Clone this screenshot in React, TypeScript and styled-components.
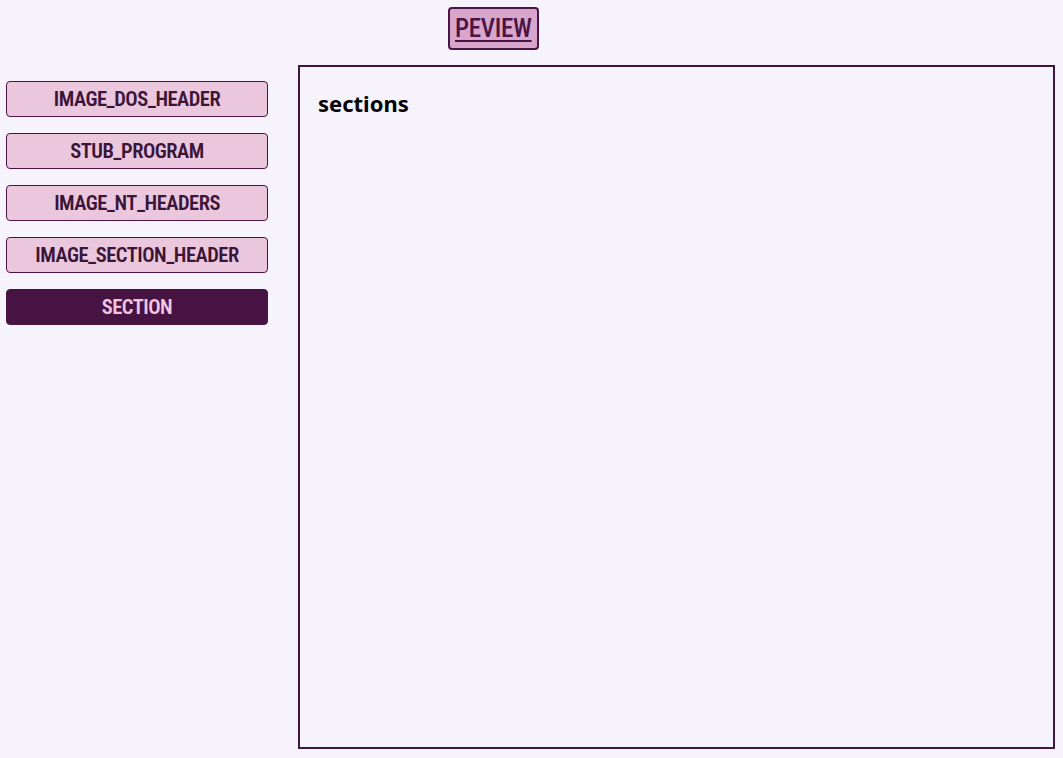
import React from "react";
import styled, { createGlobalStyle } from "styled-components";

const Global = createGlobalStyle`
  html, body { margin: 0; padding: 0; background: #f6f3fd; }
  body { font-family: "Noto Sans", sans-serif; }
`;

const Page = styled.div`
  width: 1063px;
  height: 758px;
  box-sizing: border-box;
  padding: 7px 8px 9px 6px;
  display: flex;
  flex-direction: column;
  background: #f6f3fd;
`;

const TopBar = styled.div`
  display: flex;
  justify-content: flex-start;
  padding-left: 442px;
  height: 43px;
`;

const PreviewButton = styled.button`
  box-sizing: border-box;
  height: 43px;
  padding: 0 5px;
  border: 2px solid #4b1446;
  border-radius: 4px;
  background: #d9a6cb;
  color: #4b1446;
  font-family: "Roboto Condensed", Roboto, sans-serif;
  font-weight: 500;
  font-size: 25px;
  letter-spacing: -0.3px;
  text-decoration: underline;
  text-underline-offset: 3px;
  cursor: pointer;
`;

const Body = styled.div`
  display: flex;
  flex: 1;
  margin-top: 15px;
  gap: 30px;
`;

const Sidebar = styled.nav`
  width: 262px;
  display: flex;
  flex-direction: column;
  gap: 16px;
  padding-top: 16px;
`;

const NavButton = styled.button<{ $active?: boolean }>`
  box-sizing: border-box;
  height: 36px;
  width: 100%;
  padding: 0;
  border: 1px solid #4b1446;
  border-radius: 4px;
  background: ${(p) => (p.$active ? "#461342" : "#ebc7de")};
  color: ${(p) => (p.$active ? "#f3c6e0" : "#3b1538")};
  font-family: "Roboto Condensed", Roboto, sans-serif;
  font-weight: 600;
  font-size: 20.5px;
  letter-spacing: -0.5px;
  cursor: pointer;
`;

const Panel = styled.main`
  flex: 1;
  box-sizing: border-box;
  border: 2px solid #3f1640;
  padding: 21px 18px;
`;

const Title = styled.h2`
  margin: 0;
  font-family: "Noto Sans", "Open Sans", sans-serif;
  font-weight: 700;
  font-size: 22px;
  color: #000;
`;

const items = [
  "IMAGE_DOS_HEADER",
  "STUB_PROGRAM",
  "IMAGE_NT_HEADERS",
  "IMAGE_SECTION_HEADER",
  "SECTION",
];

export default function App() {
  return (
    <>
      <Global />
      <Page>
        <TopBar>
          <PreviewButton>PEVIEW</PreviewButton>
        </TopBar>
        <Body>
          <Sidebar>
            {items.map((it) => (
              <NavButton key={it} $active={it === "SECTION"}>
                {it}
              </NavButton>
            ))}
          </Sidebar>
          <Panel>
            <Title>sections</Title>
          </Panel>
        </Body>
      </Page>
    </>
  );
}
